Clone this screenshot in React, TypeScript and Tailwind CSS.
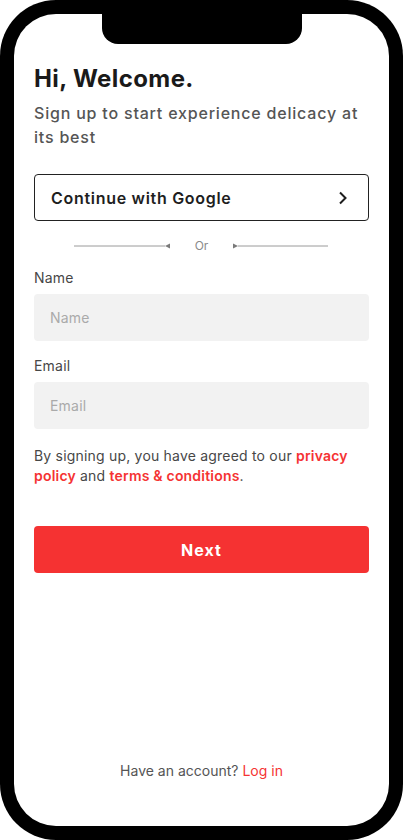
import { useState } from "react";

const font = { fontFamily: "Inter, 'Noto Sans', sans-serif" };

function Divider() {
  return (
    <div className="mt-[19px] flex items-center justify-center text-[#8a8a8a]">
      <svg width="98" height="8" viewBox="0 0 98 8">
        <line x1="1" y1="4" x2="92" y2="4" stroke="#9a9a9a" strokeWidth="1" />
        <polygon points="92,4 97,1.5 97,6.5" fill="#7a7a7a" />
      </svg>
      <span className="mx-[24px] text-[12px] leading-none">Or</span>
      <svg width="98" height="8" viewBox="0 0 98 8">
        <polygon points="1,1.5 6,4 1,6.5" fill="#7a7a7a" />
        <line x1="6" y1="4" x2="96" y2="4" stroke="#9a9a9a" strokeWidth="1" />
      </svg>
    </div>
  );
}

function Field({ label, value, onChange }: { label: string; value: string; onChange: (v: string) => void }) {
  return (
    <div className="flex flex-col">
      <label className="text-[14px] leading-5 text-[#474747] tracking-[0.2px]">{label}</label>
      <input
        value={value}
        onChange={(e) => onChange(e.target.value)}
        placeholder={label}
        className="mt-[6px] h-[47px] w-full rounded-[4px] bg-[#f2f2f2] px-4 text-[14px] text-[#333] tracking-[0.2px] outline-none placeholder:text-[#aaaaaa]"
      />
    </div>
  );
}

export default function App() {
  const [name, setName] = useState("");
  const [email, setEmail] = useState("");

  return (
    <div style={font} className="h-[840px] w-[403px] rounded-[56px] bg-black p-[14px]">
      <div className="relative flex h-full flex-col rounded-[42px] bg-white px-5">
        <div className="absolute left-1/2 top-0 h-[30px] w-[200px] -translate-x-1/2 rounded-b-[16px] bg-black" />

        <h1 className="mt-[49px] text-[24px] font-bold leading-8 tracking-[0.4px] text-[#1a1a1a]">Hi, Welcome.</h1>
        <p className="mt-[6px] text-[16px] font-medium leading-6 tracking-[0.8px] text-[#555555]">
          Sign up to start experience delicacy at its best
        </p>

        <button className="mt-[25px] flex h-[47px] shrink-0 items-center justify-between rounded-[4px] border border-[#222] pl-4 pr-5 text-left">
          <span className="text-[16px] font-semibold tracking-[0.7px] text-[#1e1e1e]">Continue with Google</span>
          <svg width="10" height="14" viewBox="0 0 10 14" fill="none">
            <polyline points="2,1.5 7.5,7 2,12.5" stroke="#1e1e1e" strokeWidth="2" />
          </svg>
        </button>

        <Divider />

        <div className="mt-[16px] flex flex-col gap-[15px]">
          <Field label="Name" value={name} onChange={setName} />
          <Field label="Email" value={email} onChange={setEmail} />
        </div>

        <p className="mt-[17px] text-[14px] leading-5 tracking-[0.2px] text-[#474747]">
          By signing up, you have agreed to our{" "}
          <span className="font-semibold text-[#f53333]">privacy policy</span> and{" "}
          <span className="font-semibold text-[#f53333]">terms &amp; conditions</span>.
        </p>

        <button className="mt-[40px] h-[47px] shrink-0 rounded-[4px] bg-[#f53232] text-[16px] font-bold tracking-[1px] text-white">
          Next
        </button>

        <div className="mt-auto mb-[45px] text-center text-[14px] text-[#555555]">
          Have an account? <span className="text-[#f53333]">Log in</span>
        </div>
      </div>
    </div>
  );
}
